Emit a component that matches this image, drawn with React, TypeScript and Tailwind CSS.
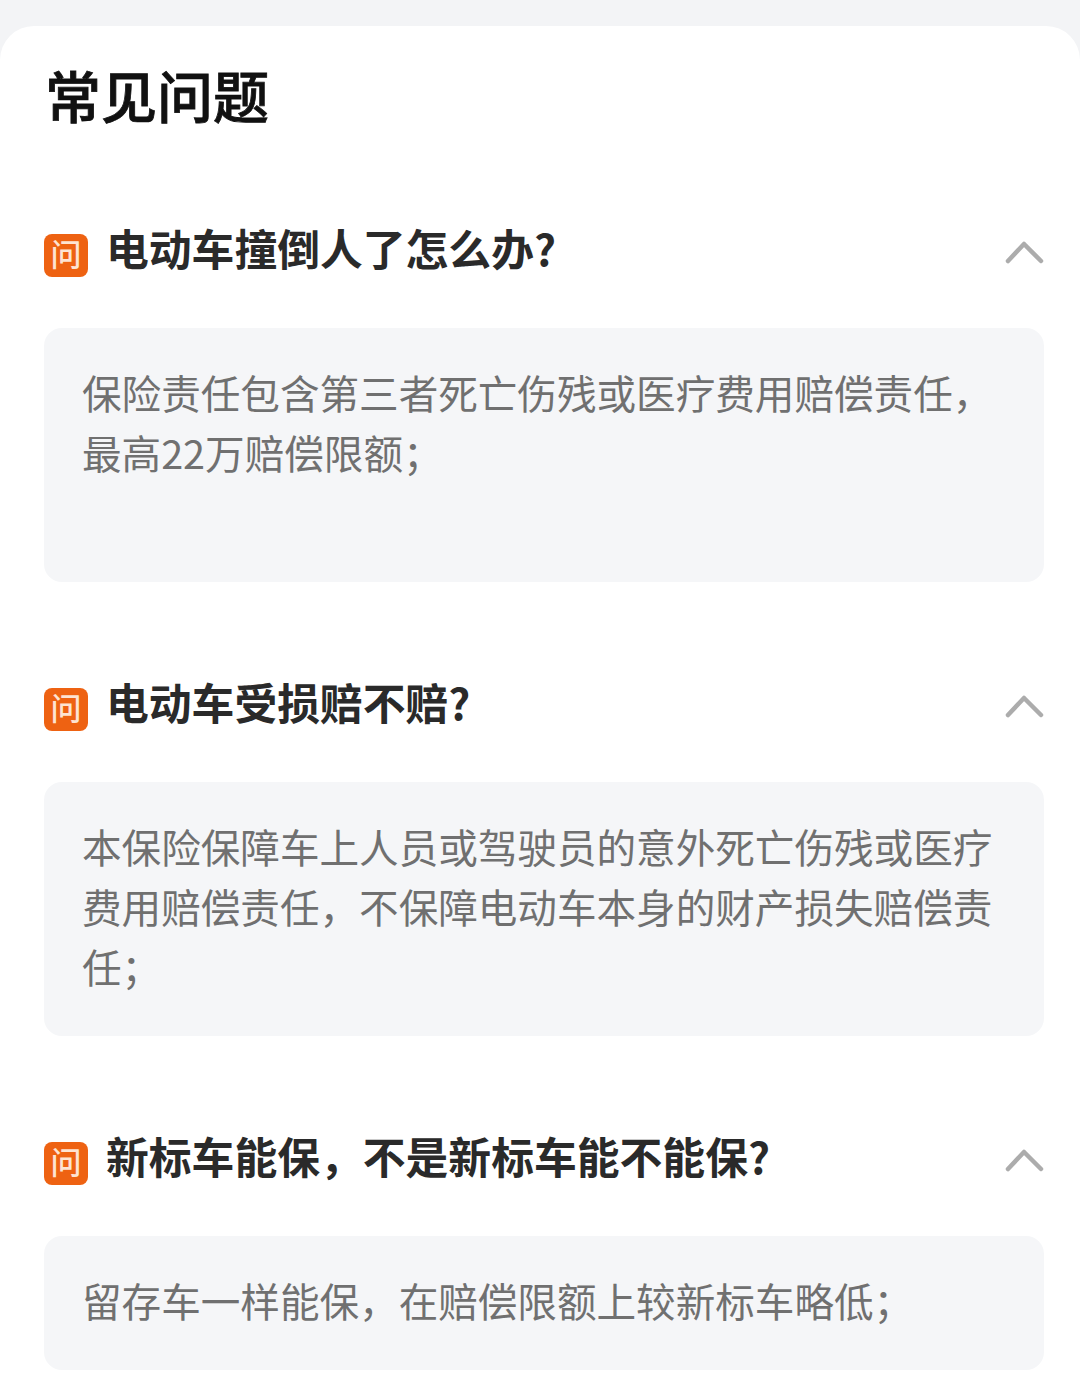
const faqs = [
  {
    question: "电动车撞倒人了怎么办?",
    answer: ["保险责任包含第三者死亡伤残或医疗费用赔偿责任，", "最高22万赔偿限额；", "\u00a0"],
  },
  {
    question: "电动车受损赔不赔?",
    answer: [
      "本保险保障车上人员或驾驶员的意外死亡伤残或医疗",
      "费用赔偿责任，不保障电动车本身的财产损失赔偿责",
      "任；",
    ],
  },
  {
    question: "新标车能保，不是新标车能不能保?",
    answer: ["留存车一样能保，在赔偿限额上较新标车略低；"],
  },
];

const App = () => {
  return (
    <div
      className="w-[1080px] h-[1398px] overflow-hidden bg-[#f3f4f6] pt-[26px]"
      style={{ fontFamily: '"Noto Sans CJK SC", "Noto Sans", sans-serif' }}
    >
      <div className="h-full rounded-t-[34px] bg-white pl-[44px] pr-[36px]">
        <h1 className="pt-[30px] pl-[1px] text-[56px] leading-[76px] font-medium text-[#111111] [-webkit-text-stroke:0.8px_#111111]">
          常见问题
        </h1>

        <div className="flex flex-col gap-[84px] pt-[80px]">
          {faqs.map((faq) => (
            <div key={faq.question}>
              <div className="flex h-[70px] items-center">
                <div className="flex h-[43px] w-[44px] shrink-0 translate-y-[8px] items-center justify-center rounded-[8px] bg-[#ee6212] pb-[5px] text-[31px] leading-none font-medium text-[#fde4d2]">
                  问
                </div>
                <p className="ml-[18px] text-[42.8px] leading-[60px] font-bold text-[#2a2a2a]">
                  {faq.question}
                </p>
                <svg
                  className="ml-auto translate-y-[5px]"
                  width="40"
                  height="24"
                  viewBox="0 0 40 24"
                  fill="none"
                  stroke="#acacac"
                  strokeWidth="4.5"
                  strokeLinecap="round"
                  strokeLinejoin="round"
                >
                  <path d="M4 21 L20 4 L37 21" />
                </svg>
              </div>

              <div className="mt-[46px] rounded-[18px] bg-[#f5f6f8] pt-[34px] pb-[40px] pl-[38px] text-[39.6px] leading-[60px] text-[#707070]">
                {faq.answer.map((line, i) => (
                  <p key={i} className="whitespace-nowrap">
                    {line}
                  </p>
                ))}
              </div>
            </div>
          ))}
        </div>
      </div>
    </div>
  );
};

export default App;
